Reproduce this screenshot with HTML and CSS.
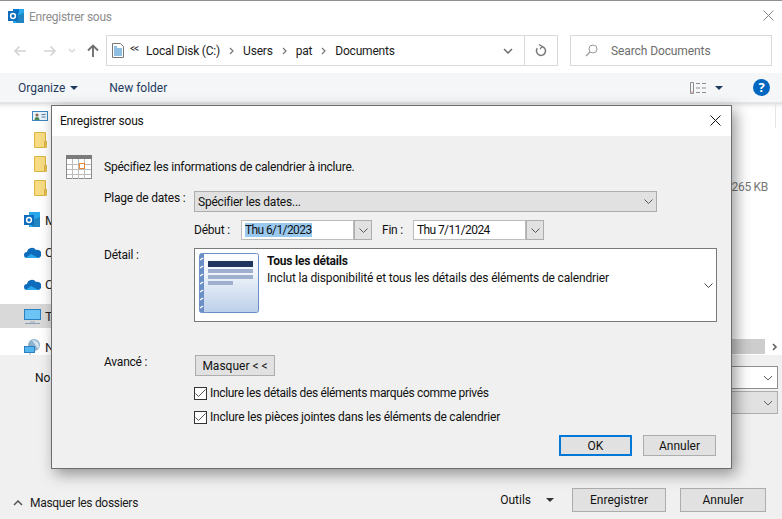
FILE: index.html
```html
<!DOCTYPE html>
<html lang="fr">
<head>
<meta charset="utf-8">
<title>Enregistrer sous</title>
<link rel="stylesheet" href="styles.css">
</head>
<body>
<div class="win">
  <div class="topline"></div>
  <header class="titlebar">
    <svg class="outlook" width="17" height="16" viewBox="0 0 17 16"><rect x="5" y="1" width="11" height="14" fill="#28a8ea"/><rect x="5" y="1" width="6" height="4" fill="#0078d4"/><path d="M8 8l8-3v10H8z" fill="#14447d" opacity=".35"/><rect x="0" y="3" width="10" height="10" fill="#0f6cbd"/><circle cx="5" cy="8" r="2.4" fill="none" stroke="#fff" stroke-width="1.5"/></svg>
    <span class="wintitle">Enregistrer sous</span>
    <svg class="winclose" width="11" height="11" viewBox="0 0 11 11"><path d="M.5.5l10 10M10.500.5l-10 10" stroke="#8a8a8a" fill="none"/></svg>
  </header>
  <nav class="navrow">
    <div class="arrows">
      <svg width="14" height="12" viewBox="0 0 14 12"><path d="M13 6H2M6.500 1.500L2 6l4.500 4.500" stroke="#d3d3d3" stroke-width="1.600" fill="none"/></svg>
      <svg class="fwd" width="14" height="12" viewBox="0 0 14 12"><path d="M1 6h11M7.500 1.500L12 6l-4.500 4.500" stroke="#d3d3d3" stroke-width="1.600" fill="none"/></svg>
      <svg class="rec" width="8" height="5" viewBox="0 0 8 5"><path d="M1 1l3 3 3-3" stroke="#d3d3d3" stroke-width="1.200" fill="none"/></svg>
      <svg class="up" width="12" height="13" viewBox="0 0 12 13"><path d="M6 13V2M1 6.500L6 1.500l5 5" stroke="#6f6f6f" stroke-width="1.900" fill="none"/></svg>
    </div>
    <div class="address">
      <svg class="docicon" width="12" height="15" viewBox="0 0 12 15"><path d="M.5.5h8l3 3v11H.5z" fill="#fff" stroke="#777"/><path d="M2 4h3M2 6h8M2 8h8M2 10h8M2 12h8" stroke="#1f7fc4"/></svg>
      <span class="chev2">&lt;&lt;</span>
      <span class="crumb">Local Disk (C:)</span><svg class="sep" width="5" height="8" viewBox="0 0 5 8"><path d="M1 1l3 3-3 3" stroke="#777" stroke-width="1.200" fill="none"/></svg>
      <span class="crumb">Users</span><svg class="sep" width="5" height="8" viewBox="0 0 5 8"><path d="M1 1l3 3-3 3" stroke="#777" stroke-width="1.200" fill="none"/></svg>
      <span class="crumb">pat</span><svg class="sep" width="5" height="8" viewBox="0 0 5 8"><path d="M1 1l3 3-3 3" stroke="#777" stroke-width="1.200" fill="none"/></svg>
      <span class="crumb">Documents</span>
      <span class="addrspace"></span>
      <svg class="addrdown" width="10" height="6" viewBox="0 0 10 6"><path d="M1 1l4 4 4-4" stroke="#6d6d6d" stroke-width="1.500" fill="none"/></svg>
      <span class="refresh"><svg width="12" height="13" viewBox="0 0 12 13"><path d="M7 2.500a4.500 4.500 0 1 1-4.700 1.800" stroke="#777" stroke-width="1.500" fill="none"/><path d="M4 .5l3.200 2L5 5" stroke="#777" stroke-width="1.200" fill="none"/></svg></span>
    </div>
    <div class="search">
      <svg width="13" height="13" viewBox="0 0 13 13"><circle cx="8" cy="5" r="4" fill="none" stroke="#9a9a9a"/><path d="M5 8l-4 4" stroke="#9a9a9a" stroke-width="1.200"/></svg>
      <span>Search Documents</span>
    </div>
  </nav>
  <div class="toolbar">
    <span class="tool">Organize</span><i class="caret organize-caret"></i>
    <span class="tool newfolder">New folder</span>
    <span class="addrspace"></span>
    <svg width="16" height="12" viewBox="0 0 16 12"><path d="M.5.500h3v11h-3zM6 1.500h4M12 1.500h4M6 6h4M12 6h4M6 10.500h4M12 10.500h4" stroke="#8d8d8d" fill="none"/><path d="M1.500 9.500h1v1h-1z" fill="#d44"/></svg>
    <i class="caret view-caret"></i>
    <span class="help">?</span>
  </div>
  <main class="panes">
    <aside class="tree">
      <div class="treerow first"><svg class="contact" width="16" height="10" viewBox="0 0 16 10"><rect x=".5" y=".5" width="15" height="9" fill="#e8f2fa" stroke="#3f86bd"/><circle cx="5" cy="4" r="1.600" fill="#8a6a4a"/><path d="M2.500 9c0-2 1-3 2.500-3s2.500 1 2.500 3z" fill="#4c8a5a"/><path d="M9.500 3.500h4M9.500 6h4" stroke="#5a7a9a"/></svg></div>
      <div class="treerow"><svg class="folder" width="13" height="16" viewBox="0 0 13 16"><path d="M.5.500h11v15H.5z" fill="#f8dc84" stroke="#dcb53f"/><rect x="10" y="9" width="3" height="6.500" fill="#e0b94a"/></svg></div>
      <div class="treerow"><svg class="folder" width="13" height="16" viewBox="0 0 13 16"><path d="M.5.500h11v15H.5z" fill="#f8dc84" stroke="#dcb53f"/><rect x="10" y="9" width="3" height="6.500" fill="#e0b94a"/></svg></div>
      <div class="treerow"><svg class="folder" width="13" height="16" viewBox="0 0 13 16"><path d="M.5.500h11v15H.5z" fill="#f8dc84" stroke="#dcb53f"/><rect x="10" y="9" width="3" height="6.500" fill="#e0b94a"/></svg></div>
      <div class="treerow group"><svg width="17" height="16" viewBox="0 0 17 16"><rect x="5" y="0" width="11" height="15" fill="#28a8ea"/><path d="M8 8l8-3v10H8z" fill="#14447d" opacity=".35"/><rect x="0" y="3" width="10" height="10" fill="#0f6cbd"/><circle cx="5" cy="8" r="2.400" fill="none" stroke="#fff" stroke-width="1.500"/></svg><span class="treetext">M</span></div>
      <div class="treerow group"><svg width="17" height="11" viewBox="0 0 17 11"><path d="M3 11a3 3 0 0 1 0-6 5 5 0 0 1 9-2 4 4 0 0 1 2.500 8z" fill="#0f6cbd"/><path d="M3 11a3 3 0 0 1-1-.2L7 7l7.500 4z" fill="#28a8ea"/></svg><span class="treetext">C</span></div>
      <div class="treerow group"><svg width="17" height="11" viewBox="0 0 17 11"><path d="M3 11a3 3 0 0 1 0-6 5 5 0 0 1 9-2 4 4 0 0 1 2.500 8z" fill="#0f6cbd"/><path d="M3 11a3 3 0 0 1-1-.2L7 7l7.500 4z" fill="#28a8ea"/></svg><span class="treetext">C</span></div>
      <div class="treerow group selected"><svg width="17" height="15" viewBox="0 0 17 15"><rect x=".5" y=".5" width="16" height="10" fill="#6cc4f5" stroke="#2b7fc0"/><path d="M6 13h5" stroke="#9ab"/><path d="M1 14.500h15" stroke="#8aa0b5"/></svg><span class="treetext">T</span></div>
      <div class="treerow group net"><svg width="17" height="16" viewBox="0 0 17 16"><circle cx="10" cy="6" r="6" fill="#8fb2cc"/><path d="M8 1a6 6 0 0 1 6 9z" fill="#d5e4ee"/><rect x=".5" y="7.500" width="10" height="6" fill="#55b5ee" stroke="#2b7fc0"/><path d="M5 15h2" stroke="#aaa"/></svg><span class="treetext">N</span></div>
    </aside>
    <section class="files">
      <div class="colheads"><i></i></div>
      <div class="size">265 KB</div>
      <div class="hscroll"><span class="thumb"></span><svg width="6" height="8" viewBox="0 0 6 8"><path d="M1 1l3 3-3 3" stroke="#606060" stroke-width="1.600" fill="none"/></svg></div>
    </section>
  </main>
  <section class="formarea">
    <div class="formrow"><span class="formlabel">No</span><span class="field white"><svg width="10" height="6" viewBox="0 0 10 6"><path d="M1 1l4 4 4-4" stroke="#606060" fill="none"/></svg></span></div>
    <div class="formrow"><span class="formlabel"></span><span class="field gray"><svg width="10" height="6" viewBox="0 0 10 6"><path d="M1 1l4 4 4-4" stroke="#606060" fill="none"/></svg></span></div>
  </section>
  <footer class="footer">
    <svg class="hideup" width="10" height="6" viewBox="0 0 10 6"><path d="M1 5l4-4 4 4" stroke="#555" stroke-width="1.500" fill="none"/></svg>
    <span class="hidefolders">Masquer les dossiers</span>
    <span class="addrspace"></span>
    <span class="outils">Outils</span><i class="caret black outils-caret"></i>
    <span class="btn save">Enregistrer</span>
    <span class="btn cancel">Annuler</span>
  </footer>
</div>

<div class="dialog">
  <div class="dtitle">
    <span>Enregistrer sous</span>
    <svg width="11" height="11" viewBox="0 0 11 11"><path d="M.5.500l10 10M10.500.500l-10 10" stroke="#111" fill="none"/></svg>
  </div>
  <div class="dbody">
    <div class="intro">
      <svg class="cal" width="26" height="24" viewBox="0 0 26 24"><rect x=".5" y=".5" width="25" height="23" fill="#fff" stroke="#8a8a8a"/><rect width="26" height="4" fill="#7b7b7b"/><path d="M6.500 4v20M12.500 4v20M18.500 4v20M1 9.500h24M1 14.500h24M1 19.500h24" stroke="#bbb"/><rect x="13.500" y="8.500" width="5" height="5" fill="#fff" stroke="#e8883a"/></svg>
      <span>Spécifiez les informations de calendrier à inclure.</span>
    </div>
    <div class="drow rangerow">
      <span class="dlabel">Plage de dates :</span>
      <div class="select"><span>Spécifier les dates...</span><svg width="9" height="5" viewBox="0 0 9 5"><path d="M.5.500l4 4 4-4" stroke="#555" fill="none"/></svg></div>
    </div>
    <div class="dates">
      <span class="dl1">Début :</span>
      <span class="dateinput"><span class="hl">Thu 6/1/2023</span></span><span class="datebtn"><svg width="9" height="5" viewBox="0 0 9 5"><path d="M.5.500l4 4 4-4" stroke="#555" fill="none"/></svg></span>
      <span class="dl2">Fin :</span>
      <span class="dateinput"><span>Thu 7/11/2024</span></span><span class="datebtn"><svg width="9" height="5" viewBox="0 0 9 5"><path d="M.5.500l4 4 4-4" stroke="#555" fill="none"/></svg></span>
    </div>
    <div class="drow detailrow">
      <span class="dlabel">Détail :</span>
      <div class="detail">
        <svg class="memo" width="60" height="60" viewBox="0 0 60 60"><defs><linearGradient id="mg" x1="0" y1="0" x2="0" y2="1"><stop offset="0" stop-color="#fff"/><stop offset=".35" stop-color="#eef3fa"/><stop offset="1" stop-color="#bcd0ea"/></linearGradient></defs><rect x=".5" y=".5" width="59" height="59" rx="2" fill="url(#mg)" stroke="#6a8fc4"/><rect x="1" y="1" width="4" height="58" fill="#6a8fc4"/><path d="M1 7l3-2M1 15l3-2M1 23l3-2M1 31l3-2M1 39l3-2M1 47l3-2M1 55l3-2" stroke="#fff" stroke-width="1.500"/><rect x="9" y="8" width="45" height="6" fill="#21365f"/><rect x="9" y="16" width="45" height="4" fill="#9fb0cf"/><rect x="9" y="22" width="45" height="4" fill="#9fb0cf"/><rect x="9" y="28" width="25" height="4" fill="#9fb0cf"/></svg>
        <div class="dettext"><b>Tous les détails</b><span>Inclut la disponibilité et tous les détails des éléments de calendrier</span></div>
        <svg class="detchev" width="9" height="5" viewBox="0 0 9 5"><path d="M.5.500l4 4 4-4" stroke="#444" fill="none"/></svg>
      </div>
    </div>
    <div class="drow advrow">
      <span class="dlabel">Avancé :</span>
      <span class="btn hidebtn">Masquer &lt; &lt;</span>
    </div>
    <label class="check first"><span class="box"><svg width="11" height="9" viewBox="0 0 11 9"><path d="M.5 4.500l3 3 7-7" stroke="#555" fill="none"/></svg></span>Inclure les détails des éléments marqués comme privés</label>
    <label class="check"><span class="box"><svg width="11" height="9" viewBox="0 0 11 9"><path d="M.5 4.500l3 3 7-7" stroke="#555" fill="none"/></svg></span>Inclure les pièces jointes dans les éléments de calendrier</label>
    <div class="dactions">
      <span class="btn ok">OK</span>
      <span class="btn dcancel">Annuler</span>
    </div>
  </div>
</div>
</body>
</html>
```

FILE: styles.css
```css
* { box-sizing: border-box; }
html, body { margin: 0; height: 100%; overflow: hidden; }
body { font-family: Roboto, "Noto Sans", sans-serif; font-size: 12px; color: #000; background: #fff; }
svg { display: block; flex: none; }
.win { width: 782px; height: 519px; display: flex; flex-direction: column; background: #fff; }
.topline { height: 1px; background: #8f8f8f; }
.titlebar { height: 30px; display: flex; align-items: center; padding: 0 8px 0 8px; }
.wintitle { margin-left: 4px; margin-top: 1px; color: #8e8e8e; letter-spacing: -.25px; }
.winclose { margin-left: auto; margin-top: -1px; }
.navrow { height: 31px; margin-top: 4px; display: flex; align-items: stretch; }
.arrows { width: 106px; display: flex; align-items: center; padding-left: 13px; }
.fwd { margin-left: 16px; }
.rec { margin-left: 11px; }
.up { margin-left: 11px; }
.address { width: 452px; border: 1px solid #d9d9d9; display: flex; align-items: center; padding-left: 5px; }
.docicon { margin-right: 6px; }
.chev2 { font-size: 10px; margin-right: 8px; margin-top: -4px; color: #333; letter-spacing: -1px; width: 8px; }
.crumb { color: #1a1a1a; letter-spacing: -.2px; }
.sep { margin: 0 9px; }
.addrspace { flex: 1; }
.addrdown { margin-right: 11px; }
.refresh { width: 33px; height: 100%; border-left: 1px solid #d9d9d9; display: flex; align-items: center; justify-content: center; }
.search { width: 202px; margin-left: 12px; border: 1px solid #d9d9d9; display: flex; align-items: center; padding-left: 14px; gap: 13px; color: #6d6d6d; letter-spacing: -.1px; }
.toolbar { height: 30px; margin-top: 7px; background: #f5f6f7; display: flex; align-items: center; padding: 0 12px 0 18px; border-bottom: 1px solid #e6e6e6; }
.tool { color: #1f3a5f; }
.caret { width: 0; height: 0; border: 4px solid transparent; border-top: 4px solid #1f3a5f; border-bottom: 0; display: block; flex: none; }
.organize-caret { margin-left: 5px; }
.newfolder { margin-left: 31px; }
.view-caret { margin-left: 9px; }
.help { margin-left: 30px; width: 17px; height: 17px; border-radius: 50%; background: #0067c0; color: #fff; font: bold 13px/17px "Noto Sans", sans-serif; text-align: center; }
.panes { height: 252px; display: flex; box-shadow: inset 0 6px 5px -5px #cfcfcf; }
.tree { width: 52px; padding-top: 1px; flex: none; }
.treerow { height: 24px; padding-left: 24px; display: flex; align-items: center; font-size: 13px; }
.treerow.first { padding-left: 32px; }
.treerow .folder { margin-left: 10px; }
.treerow.group { margin-top: 8px; }
.treerow.selected { background: #d9d9d9; }
.treerow.net { margin-top: 7px; }
.treetext { margin-left: 4px; color: #222; }
.files { flex: 1; display: flex; flex-direction: column; }
.colheads { height: 25px; display: flex; justify-content: flex-end; padding-right: 6px; }
.colheads i { width: 1px; background: #e5e5e5; display: block; }
.size { margin: 52px 0 0 auto; padding-right: 14px; color: #777; letter-spacing: -.3px; }
.hscroll { margin-top: auto; margin-bottom: 1px; height: 15px; display: flex; align-items: center; }
.thumb { width: 713px; height: 100%; background: #cdcdcd; }
.hscroll svg { margin-left: 7px; }
.formarea { height: 106px; background: #f0f0f0; padding-top: 11px; }
.formrow { height: 23px; display: flex; align-items: center; margin-bottom: 2px; padding-left: 35px; padding-right: 4px; }
.formlabel { width: 100px; color: #111; }
.field { flex: 1; height: 23px; display: flex; align-items: center; justify-content: flex-end; padding-right: 4px; border: 1px solid #8f8f8f; }
.field.white { background: #fff; }
.field.gray { background: #e1e1e1; border-color: #adadad; }
.footer { flex: 1; background: #f0f0f0; display: flex; align-items: center; padding: 23px 16px 0 13px; margin-top: -3px; }
.hideup { margin-right: 7px; margin-top: 6px; }
.hidefolders { color: #1a1a1a; margin-top: 6px; letter-spacing: -.3px; }
.outils { color: #111; }
.black { border-top-color: #333; }
.outils-caret { margin-left: 15px; }
.btn { background: #e1e1e1; border: 1px solid #adadad; display: flex; align-items: center; justify-content: center; color: #111; }
.save { width: 94px; height: 24px; margin-left: 18px; }
.cancel { width: 86px; height: 24px; margin-left: 14px; }
.dialog { position: absolute; left: 51px; top: 105px; width: 681px; height: 364px; border: 1px solid #6d6d6d; background: #f0f0f0; box-shadow: 4px 5px 14px rgba(0,0,0,.4); display: flex; flex-direction: column; }
.dtitle { height: 30px; background: #fff; display: flex; align-items: center; justify-content: space-between; padding: 0 10px 1px 8px; color: #111; flex: none; letter-spacing: -.2px; }
.dbody { flex: 1; padding: 0 14px; color: #111; letter-spacing: -.22px; }
.intro { height: 29px; margin-top: 19px; display: flex; align-items: flex-start; }
.intro span { margin: 5px 0 0 12px; }
.drow { display: flex; }
.dlabel { width: 90px; margin-left: 38px; flex: none; line-height: 15px; }
.rangerow { margin-top: 7px; }
.select { width: 463px; height: 21px; background: #e1e1e1; border: 1px solid #adadad; display: flex; align-items: center; justify-content: space-between; padding: 0 3px 0 3px; }
.dates { display: flex; align-items: center; height: 20px; margin: 8px 0 0 128px; }
.dl1 { width: 47px; }
.dl2 { margin-left: 10px; width: 31px; }
.dateinput { width: 113px; height: 20px; background: #fff; border: 1px solid #bcbcbc; padding: 0 3px; display: flex; align-items: center; letter-spacing: -.6px; }
.hl { background: #99c9ef; }
.datebtn { width: 18px; height: 20px; background: #e1e1e1; border: 1px solid #adadad; display: flex; align-items: center; justify-content: center; }
.detailrow { margin-top: 8px; }
.detail { width: 523px; height: 74px; background: #fff; border: 1px solid #7a7a7a; display: flex; align-items: flex-start; padding: 4px 4px 0 4px; }
.dettext { margin-left: 8px; display: flex; flex-direction: column; line-height: 17px; letter-spacing: -.16px; }
.dettext b { font-weight: 700; letter-spacing: -.22px; }
.detchev { margin-left: auto; margin-top: 30px; margin-right: -1px; }
.advrow { margin-top: 33px; height: 21px; align-items: flex-start; }
.hidebtn { width: 80px; height: 21px; margin-left: 1px; letter-spacing: 0; }
.check { display: flex; align-items: center; height: 14px; margin-left: 128px; gap: 3px; }
.check.first { margin-top: 10px; letter-spacing: -.33px; }
.check + .check { margin-top: 10px; }
.box { width: 13px; height: 13px; border: 1px solid #333; background: #fff; display: flex; align-items: center; justify-content: center; }
.dactions { display: flex; justify-content: flex-end; gap: 11px; margin-top: 11px; padding-right: 1px; letter-spacing: 0; }
.ok, .dcancel { width: 73px; height: 21px; }
.ok { border: 2px solid #0078d7; }
```
